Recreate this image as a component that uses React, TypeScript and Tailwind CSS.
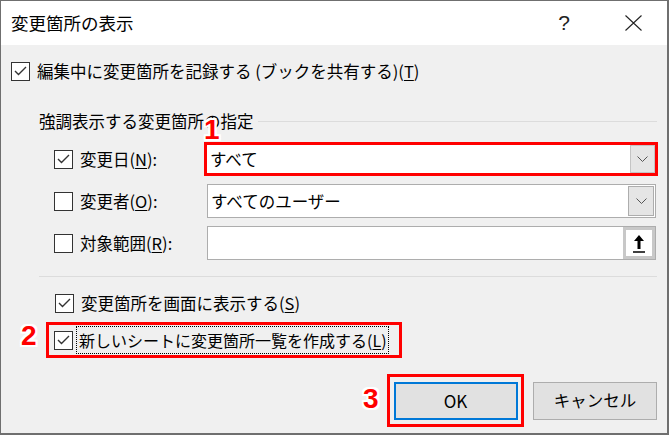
import React from "react";

function Box({ checked }: { checked?: boolean }) {
  return (
    <span className="flex h-[19px] w-[19px] shrink-0 items-center justify-center border border-[#333333] bg-white">
      {checked && (
        <svg width="13" height="10" viewBox="0 0 13 10">
          <path d="M1 5 L4.5 8.5 L12 1" fill="none" stroke="#333333" strokeWidth="1.4" />
        </svg>
      )}
    </span>
  );
}

function Chevron() {
  return (
    <svg width="11" height="6" viewBox="0 0 11 6">
      <path d="M0.5 0.5 L5.5 5.5 L10.5 0.5" fill="none" stroke="#555555" strokeWidth="1" />
    </svg>
  );
}

function Mark({ n, className }: { n: string; className: string }) {
  return (
    <span
      className={
        "absolute font-['Liberation_Sans',Arial,sans-serif] text-[28px] leading-none font-bold text-[#ff0000] [text-shadow:2px_0_0_#fff,-2px_0_0_#fff,0_2px_0_#fff,0_-2px_0_#fff,2px_2px_0_#fff,-2px_-2px_0_#fff,2px_-2px_0_#fff,-2px_2px_0_#fff] " +
        className
      }
    >
      {n}
    </span>
  );
}

export default function App() {
  return (
    <div className="flex h-[435px] w-[669px] flex-col whitespace-nowrap border-t border-r-2 border-b-2 border-l border-[#6f6f6f] bg-[#f0f0f0] font-['Noto_Sans_CJK_JP','Noto_Sans',sans-serif] text-[16.5px] text-black">
      {/* title bar */}
      <div className="flex h-[44px] shrink-0 items-center bg-white pl-[10px]">
        <span className="text-[17.5px]">変更箇所の表示</span>
        <span className="ml-auto mr-[55px] font-['Liberation_Sans',Arial,sans-serif] text-[21px] text-[#222]">?</span>
        <svg className="mr-[25px]" width="17" height="16" viewBox="0 0 17 16">
          <path d="M0.5 0.5 L16.5 15.5 M16.5 0.5 L0.5 15.5" stroke="#222" strokeWidth="1.1" />
        </svg>
      </div>

      <div className="relative flex flex-1 flex-col px-[10px]">
        <div className="mt-[16px] flex h-[20px] items-center gap-[7px]">
          <Box checked />
          <span>
            編集中に変更箇所を記録する (ブックを共有する)(<u className="underline-offset-2">T</u>)
          </span>
        </div>

        <div className="mt-[30px] ml-[28px] flex h-[20px] items-center">
          <span>強調表示する変更箇所の指定</span>
          <span className="ml-[4px] h-px flex-1 bg-[#dcdcdc]" />
        </div>
        <Mark n="1" className="left-[203px] top-[71px]" />

        <div className="mt-[11px] ml-[43px] flex flex-col gap-[8px]">
          <div className="flex h-[34px] items-center">
            <div className="flex w-[150px] items-center gap-[7px]">
              <Box checked />
              <span>
                変更日(<u className="underline-offset-2">N</u>):
              </span>
            </div>
            <div className="mr-[-1px] flex h-[34px] flex-1 border-[3px] border-[#ff0000] bg-white">
              <span className="flex flex-1 items-center pl-[3px]">すべて</span>
              <span className="flex w-[25px] items-center justify-center border border-[#c4c4c4] bg-[#e5e5e5]">
                <Chevron />
              </span>
            </div>
          </div>

          <div className="flex h-[34px] items-center">
            <div className="flex w-[153px] items-center gap-[7px]">
              <Box />
              <span>
                変更者(<u className="underline-offset-2">O</u>):
              </span>
            </div>
            <div className="mr-[1px] flex h-[34px] flex-1 border border-[#adadad] bg-white p-px">
              <span className="flex flex-1 items-center pl-[2px]">すべてのユーザー</span>
              <span className="flex w-[26px] items-center justify-center border border-[#adadad] bg-[#e5e5e5]">
                <Chevron />
              </span>
            </div>
          </div>

          <div className="flex h-[34px] items-center">
            <div className="flex w-[153px] items-center gap-[7px]">
              <Box />
              <span>
                対象範囲(<u className="underline-offset-2">R</u>):
              </span>
            </div>
            <div className="mr-[1px] flex h-[34px] flex-1 border border-[#adadad] bg-white">
              <span className="flex-1" />
              <span className="flex w-[32px] items-center justify-center border-[3px] border-[#c8c8c8] bg-white">
                <svg width="12" height="19" viewBox="0 0 12 19">
                  <path d="M6 1 L11 7 L7.5 7 L7.5 15 L4.5 15 L4.5 7 L1 7 Z" fill="#000" />
                  <path d="M0 18 L12 18" stroke="#000" strokeWidth="1.5" />
                </svg>
              </span>
            </div>
          </div>
        </div>

        <div className="mt-[16px] ml-[28px] h-px bg-[#dcdcdc]" />

        <div className="mt-[16px] ml-[44px] flex h-[20px] items-center gap-[7px]">
          <Box checked />
          <span>
            変更箇所を画面に表示する(<u className="underline-offset-2">S</u>)
          </span>
        </div>

        <Mark n="2" className="left-[20px] top-[277px]" />
        <div className="mt-[9px] ml-[35px] flex h-[36px] w-[356px] items-center border-[3px] border-[#ff0000] pl-[5px]">
          <Box checked />
          <span className="ml-[3px] shrink-0 border border-dotted border-black pr-px pl-[2px] text-[16px] leading-[26px]">
            新しいシートに変更箇所一覧を作成する(<u className="underline-offset-2">L</u>)
          </span>
        </div>

        <div className="mt-[16px] flex items-center justify-end">
          <div className="relative flex h-[53px] w-[137px] items-center justify-center border-[3px] border-[#ff0000]">
            <Mark n="3" className="left-[-27px] top-[8px]" />
            <span className="flex h-[38px] w-[124px] items-center justify-center border-2 border-[#0078d7] bg-[#e1e1e1] text-[17px]">
              OK
            </span>
          </div>
          <span className="ml-[9px] flex h-[38px] w-[124px] items-center justify-center border border-[#adadad] bg-[#e1e1e1]">
            キャンセル
          </span>
        </div>
      </div>
    </div>
  );
}
